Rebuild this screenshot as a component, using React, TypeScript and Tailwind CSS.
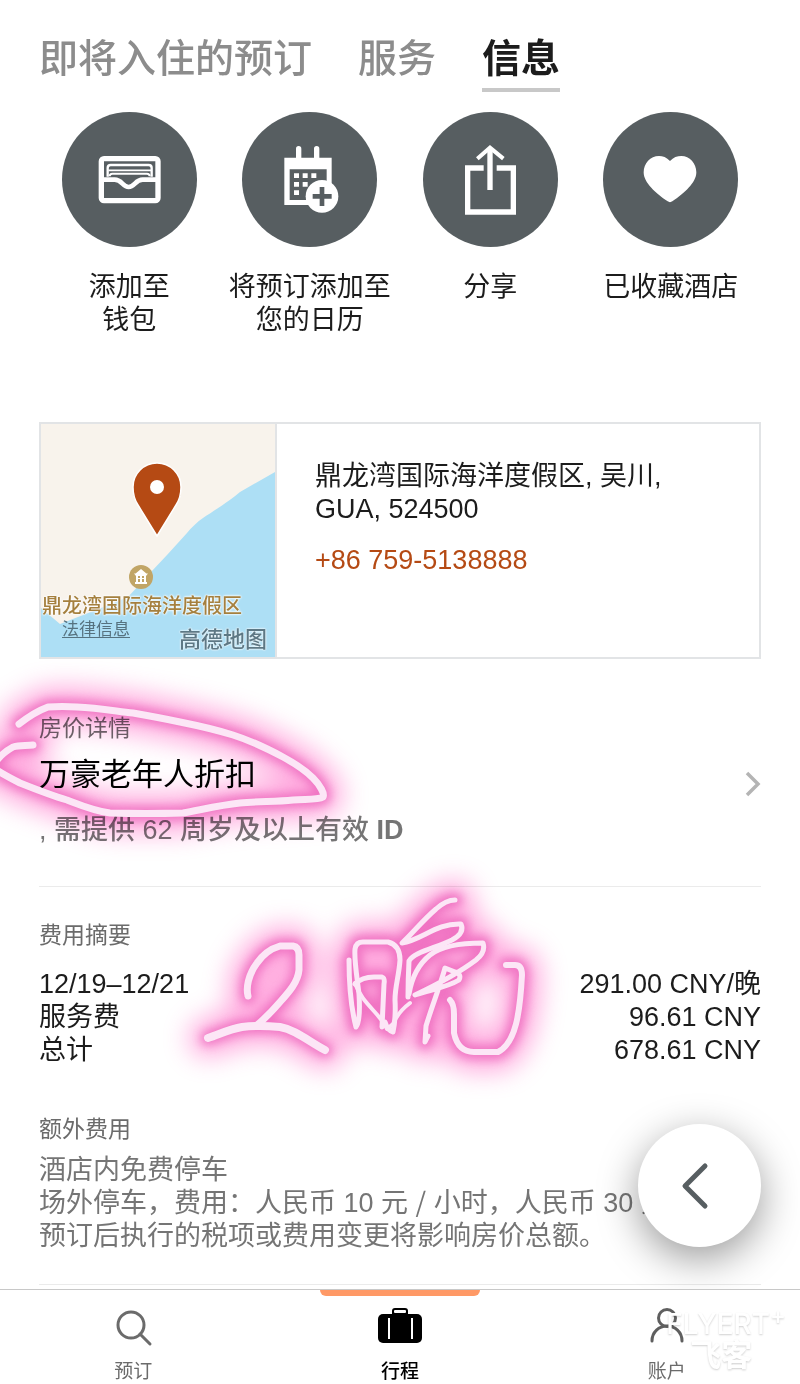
import type { ReactNode } from "react";

const tabs = [
  { label: "即将入住的预订", active: false },
  { label: "服务", active: false },
  { label: "信息", active: true },
];

const WalletIcon = () => (
  <svg viewBox="0 0 405 405" className="w-full h-full" fill="none" stroke="#fff" aria-hidden="true">
    <rect x="118" y="140" width="170" height="126" rx="8" strokeWidth="16" />
    <path d="M137 194V168q0-9 9-9H260q9 0 9 9v26" strokeWidth="7" />
    <path d="M139 175H267" strokeWidth="5" />
    <path d="M143 193q0-8 8-8H255q8 0 8 8" strokeWidth="6" />
    <path d="M118 203H158c22 0 24 22 42 22s20-22 42-22H288" strokeWidth="14" />
  </svg>
);

const CalendarIcon = () => (
  <svg viewBox="0 0 405 405" className="w-full h-full" aria-hidden="true">
    <path d="M170 110v34M224 110v34" stroke="#fff" strokeWidth="16" strokeLinecap="round" />
    <path fill="#fff" fillRule="evenodd" d="M127 137H269V279H127zM143 172V264H254V172z" />
    <path
      fill="#fff"
      d="M156 184h15v14h-15zM182 184h15v14h-15zM208 184h15v14h-15zM156 210h15v14h-15zM182 210h15v14h-15zM156 235h15v14h-15z"
    />
    <circle cx="240" cy="253" r="49" fill="#fff" />
    <path d="M212 253h57M240 225v57" stroke="#575e61" strokeWidth="14" />
  </svg>
);

const ShareIcon = () => (
  <svg viewBox="0 0 405 405" className="w-full h-full" fill="none" stroke="#fff" strokeWidth="16" aria-hidden="true">
    <path d="M182 168H134V300H271V168H221" />
    <path d="M201 234V110" />
    <path d="M163 140L201 107L241 140" strokeWidth="12" />
  </svg>
);

const HeartIcon = () => (
  <svg viewBox="0 0 405 405" className="w-full h-full" aria-hidden="true">
    <path
      fill="#fff"
      d="M201 147C191 136 179 132 168 132C142 132 122 154 122 181C122 212 158 244 194 268Q201 273 208 268C244 244 280 212 280 181C280 154 260 132 235 132C223 132 211 136 201 147Z"
    />
  </svg>
);

const actions: { lines: string[]; icon: ReactNode }[] = [
  { lines: ["添加至", "钱包"], icon: <WalletIcon /> },
  { lines: ["将预订添加至", "您的日历"], icon: <CalendarIcon /> },
  { lines: ["分享"], icon: <ShareIcon /> },
  { lines: ["已收藏酒店"], icon: <HeartIcon /> },
];

const charges = [
  { label: "12/19–12/21", amount: "291.00 CNY/晚" },
  { label: "服务费", amount: "96.61 CNY" },
  { label: "总计", amount: "678.61 CNY" },
];

// Neon pen: soft pink glow multiplied onto the page with a pale core on top
const Ink = ({ viewBox, className, paths }: { viewBox: string; className: string; paths: { d: string; w: number }[] }) => (
  <>
    <svg viewBox={viewBox} className={`${className} mix-blend-multiply`} fill="none" strokeLinecap="round" strokeLinejoin="round" aria-hidden="true">
      <g stroke="#ff70c8" strokeWidth="38" opacity="0.6" className="blur-[13px]">
        {paths.map((p) => <path key={p.d} d={p.d} />)}
      </g>
      <g stroke="#e64fb0" strokeWidth="15" opacity="0.6" className="blur-[5px]">
        {paths.map((p) => <path key={p.d} d={p.d} />)}
      </g>
    </svg>
    <svg viewBox={viewBox} className={className} fill="none" stroke="#fce6f6" strokeLinecap="round" strokeLinejoin="round" aria-hidden="true">
      {paths.map((p) => <path key={p.d} d={p.d} strokeWidth={p.w} />)}
    </svg>
  </>
);

const loopPaths = [
  {
    w: 7,
    d: "M19 724C28 717 37 711 48 707Q62 706 77 707C98 708 115 711 133 713C150 716 166 719 180 722C200 726 217 730 233 735C252 741 268 749 283 757C296 764 306 771 313 778C320 785 325 794 323 797C318 800 306 799 293 800C275 802 258 801 240 803C220 805 200 810 183 813Q146 814 110 813C94 811 80 805 67 800C50 795 35 789 20 783Q2 774 -8 767Q0 754 13 747C20 745 26 746 33 745",
  },
];

const nightPaths = [
  { w: 7, d: "M248 996C246 988 248 975 257 963Q266 950 280 946H293Q299 947 299 955V970C298 982 289 992 280 1002Q268 1016 256 1026" },
  { w: 8, d: "M208 1038C220 1034 230 1029 242 1027Q258 1025 280 1027C296 1030 308 1041 325 1050" },
  { w: 5, d: "M349 960C349 980 351 1008 356 1027C360 1022 360 1010 359 994C357 977 354 960 355 949Q356 942 363 942H388Q400 945 400 960C399 976 395 986 395 1000Q396 1018 393 1032Q388 1031 385 1022" },
  { w: 5, d: "M355 984Q362 977 374 977H382Q385 978 384 984L382 1027" },
  { w: 4, d: "M355 983C362 1004 380 1013 387 1029L393 1024Q398 1012 410 1003" },
  { w: 5, d: "M455 900Q446 900 436 909C422 921 412 934 402 943C422 940 436 923 461 924Q465 933 452 940C436 948 414 952 409 961Q408 980 408 997" },
  { w: 5, d: "M409 994C412 976 420 963 430 955Q445 943 483 943Q486 952 476 960C460 972 436 985 415 995C430 990 448 987 459 980Q462 974 455 972L445 968C440 986 432 1006 426 1026L425 1042L428 1036" },
  { w: 6, d: "M450 1000Q454 1004 454 1014V1033Q458 1052 474 1052H498C516 1043 520 1012 522 975Q522 965 515 965H506" },
];

const HotelMap = () => (
  <div className="relative w-[236px] h-[233px] shrink-0 border-r-2 border-[#e2e4e6] overflow-hidden">
    <svg viewBox="0 0 234 233" className="block w-full h-full" preserveAspectRatio="none" aria-hidden="true">
      <rect width="234" height="233" fill="#f8f3ec" />
      <path d="M234 48L199 68C190 76 174 86 162 94C156 98 150 104 146 109L126 131L110 148L87 173L60 184L19 200L0 184V233H234Z" fill="#addff5" />
      <path d="M116 112L97 81C93 75 92 70 92 63A24 24 0 0 1 140 63C140 70 139 75 135 81Z" fill="#b54a14" stroke="#fff" strokeWidth="1.5" />
      <circle cx="116" cy="63" r="7" fill="#fff" />
      <circle cx="100" cy="153" r="12" fill="#c1a566" />
      <path d="M100 145L106 150H94ZM93 149.500L107 149.500L105 152H95ZM95 152H97V158H95ZM99 152H101V158H99ZM103 152H105V158H103ZM94 158H106V160H94ZM95 154H105V155H95Z" fill="#fff" />
    </svg>
    <span className="absolute left-px top-[168px] whitespace-nowrap text-[20px] leading-7 font-medium text-[#a5803f] [text-shadow:0_0_2px_#fff,0_0_2px_#fff,0_0_3px_#fff]">
      鼎龙湾国际海洋度假区
    </span>
    <a href="#legal" className="absolute left-[21px] top-[194px] text-[17px] leading-6 text-[#56727f] underline underline-offset-2">
      法律信息
    </a>
    <span className="absolute right-[8px] top-[202px] text-[22px] leading-7 font-medium text-[#5d7885] [text-shadow:0_0_2px_#fff,0_0_2px_#fff]">
      高德地图
    </span>
  </div>
);

const BottomNav = () => (
  <nav className="relative grid grid-cols-3 h-[95px] border-t border-[#c8c8c8] bg-white text-[19px] leading-6 text-[#6b6b6b]">
    <a href="#book" className="flex flex-col items-center pt-[18px]">
      <svg viewBox="0 0 40 40" className="w-10 h-10" fill="none" stroke="#6b6b6b" strokeWidth="3" strokeLinecap="round" aria-hidden="true">
        <circle cx="18" cy="17" r="13" />
        <path d="M27 26L37 36" />
      </svg>
      <span className="mt-3">预订</span>
    </a>
    <a href="#trips" className="relative flex flex-col items-center pt-[18px] font-medium text-black">
      <span className="absolute top-0 w-[60%] h-[6px] rounded-b-md bg-[#ff9966]"></span>
      <svg viewBox="0 0 46 40" className="w-[46px] h-10" aria-hidden="true">
        <rect x="1" y="6" width="44" height="29" rx="5" />
        <rect x="15" y="0" width="16" height="9" rx="3" fill="#000" />
        <rect x="17" y="2" width="12" height="3" rx="1" fill="#fff" />
        <path d="M12 10V31M35 10V31" stroke="#fff" strokeWidth="2" />
      </svg>
      <span className="mt-3">行程</span>
    </a>
    <a href="#account" className="flex flex-col items-center pt-[18px]">
      <svg viewBox="0 0 40 40" className="w-10 h-10" fill="none" stroke="#5f5f5f" strokeWidth="3" strokeLinecap="round" aria-hidden="true">
        <circle cx="20" cy="10" r="8.500" />
        <path d="M5 33C5 24 12 18 20 18S35 24 35 33" />
      </svg>
      <span className="mt-3">账户</span>
    </a>
    <div className="absolute right-[14px] top-[18px] text-white pointer-events-none [text-shadow:0_1px_2px_#00000030]">
      <span className="flex items-start font-['Inter',sans-serif] text-[28px] leading-8 font-medium">
        FLYERT<span className="text-[24px] leading-4">+</span>
      </span>
      <span className="block pl-6 text-[31px] leading-8 font-bold">飞客</span>
    </div>
  </nav>
);

const App = () => {
  return (
    <div className="flex flex-col min-h-screen overflow-x-clip bg-white text-[#1c1c1c] text-[27px] leading-[33px] font-['Liberation_Sans','Noto_Sans_CJK_SC',sans-serif]">
      <header className="flex gap-[46px] px-[39px] pt-[30px]">
        {tabs.map((tab) => (
          <button
            key={tab.label}
            className={
              tab.active
                ? "h-[62px] py-1 border-b-4 border-[#c8c8c8] text-[39px] leading-[50px] font-bold"
                : "h-[62px] pt-1 pb-2 text-[39px] leading-[50px] font-medium text-[#8c8c8c]"
            }
          >
            {tab.label}
          </button>
        ))}
      </header>

      <main className="flex-1">
        <div className="grid grid-cols-4 px-[39px] pt-5">
          {actions.map((action) => (
            <button key={action.lines[0]} className="flex flex-col items-center justify-start">
              <span className="w-[135px] h-[135px] mb-6 rounded-full bg-[#575e61]">{action.icon}</span>
              {action.lines.map((line) => (
                <span key={line} className="whitespace-nowrap">{line}</span>
              ))}
            </button>
          ))}
        </div>

        <div className="flex mx-[39px] mt-[85px] border-2 border-[#e2e4e6]">
          <HotelMap />
          <div className="pl-[38px] pt-9">
            <p>
              鼎龙湾国际海洋度假区, 吴川,
              <br />
              GUA, 524500
            </p>
            <a href="tel:+867595138888" className="block mt-[18px] text-[#b54a14]">
              +86 759-5138888
            </a>
          </div>
        </div>

        <section className="relative px-[39px] pt-[53px]">
          <div className="flex items-center justify-between pb-[39px] border-b border-[#ebebeb]">
            <div>
              <h2 className="text-[23px] leading-[33px] text-[#6b6b6b]">房价详情</h2>
              <p className="mt-2 text-[31px] leading-[44px] text-black">万豪老年人折扣</p>
              <p className="mt-[17px] font-medium text-[#757575]">
                , 需提供 62 周岁及以上有效 <b>ID</b>
              </p>
            </div>
            <button aria-label="房价详情" className="pt-2">
              <svg viewBox="0 0 16 28" className="w-4 h-7" fill="none" stroke="#b4b4b4" strokeWidth="3.500" aria-hidden="true">
                <path d="M2 3L13 14L2 25" />
              </svg>
            </button>
          </div>
          <Ink viewBox="0 659 400 228" className="absolute left-0 top-0 w-[400px] h-[228px] overflow-visible pointer-events-none" paths={loopPaths} />
        </section>

        <section className="relative px-[39px] pt-8">
          <h2 className="text-[23px] leading-[33px] text-[#6b6b6b]">费用摘要</h2>
          <dl className="mt-4">
            {charges.map((charge) => (
              <div key={charge.label} className="flex justify-between">
                <dt>{charge.label}</dt>
                <dd>{charge.amount}</dd>
              </div>
            ))}
          </dl>
          <Ink viewBox="180 887 370 210" className="absolute left-[180px] top-0 w-[370px] h-[210px] overflow-visible pointer-events-none" paths={nightPaths} />
        </section>

        <section className="mx-[39px] mt-[46px] pb-[31px] border-b border-[#ebebeb] text-[#757575]">
          <h2 className="text-[23px] leading-[33px] text-[#6b6b6b]">额外费用</h2>
          <p className="mt-2">酒店内免费停车</p>
          <p className="whitespace-nowrap">
            场外停车，费用：人民币 10 元 <span className="font-['Noto_Sans_CJK_SC',sans-serif] leading-none">/</span> 小时，人民币 30 元 / 天
          </p>
          <p>预订后执行的税项或费用变更将影响房价总额。</p>
        </section>
      </main>

      <div className="sticky bottom-0 mt-1">
        <button
          aria-label="返回"
          className="absolute right-[39px] bottom-[137px] flex items-center justify-center w-[123px] h-[123px] rounded-full bg-white shadow-[0_12px_40px_#00000066]"
        >
          <svg viewBox="0 0 30 48" className="w-[30px] h-12 mr-3" fill="none" stroke="#575e61" strokeWidth="5" strokeLinecap="round" strokeLinejoin="round" aria-hidden="true">
            <path d="M26 4L6 24L26 44" />
          </svg>
        </button>
        <BottomNav />
      </div>
    </div>
  );
};

export default App;
